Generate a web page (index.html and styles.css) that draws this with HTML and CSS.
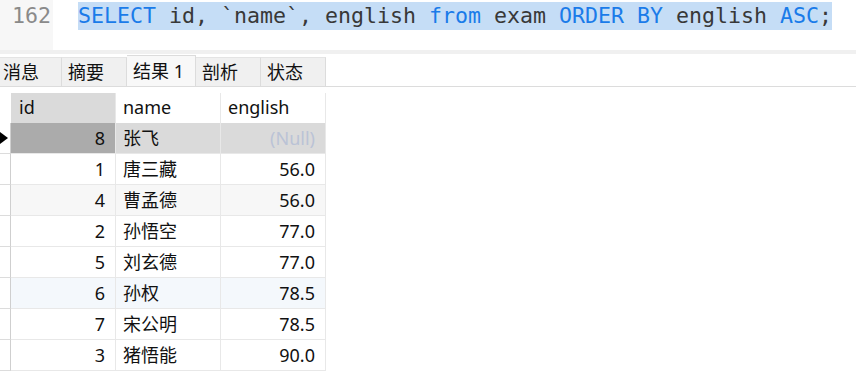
FILE: index.html
```html
<!DOCTYPE html>
<html>
<head>
    <title>Query Result</title>
  <link rel="stylesheet" href="styles.css">
</head>
  <body>
    <div class="editor">
        <div class="gutter">162</div>
        <div class="code"><span class="sel"><span class="kw">SELECT</span> id, `name`, english <span class="kw">from</span> exam <span class="kw">ORDER BY</span> english <span class="kw">ASC</span>;</span></div>
    </div>
    <div class="divider"></div>

    <div class="tabs">
        <div class="tab first">消息</div>
        <div class="tab">摘要</div>
        <div class="tab active">结果 1</div>
        <div class="tab">剖析</div>
        <div class="tab">状态</div>
    </div>

    <div class="grid">
        <div class="row head">
            <div class="cell ind"></div>
            <div class="cell id">id</div>
            <div class="cell">name</div>
            <div class="cell">english</div>
        </div>
        <div class="row current">
            <div class="cell ind"><span class="arrow"></span></div>
            <div class="cell id num">8</div>
            <div class="cell">张飞</div>
            <div class="cell num null">(Null)</div>
        </div>
        <div class="row">
            <div class="cell ind"></div>
            <div class="cell id num">1</div>
            <div class="cell">唐三藏</div>
            <div class="cell num">56.0</div>
        </div>
        <div class="row alt">
            <div class="cell ind"></div>
            <div class="cell id num">4</div>
            <div class="cell">曹孟德</div>
            <div class="cell num">56.0</div>
        </div>
        <div class="row">
            <div class="cell ind"></div>
            <div class="cell id num">2</div>
            <div class="cell">孙悟空</div>
            <div class="cell num">77.0</div>
        </div>
        <div class="row">
            <div class="cell ind"></div>
            <div class="cell id num">5</div>
            <div class="cell">刘玄德</div>
            <div class="cell num">77.0</div>
        </div>
        <div class="row hover">
            <div class="cell ind"></div>
            <div class="cell id num">6</div>
            <div class="cell">孙权</div>
            <div class="cell num">78.5</div>
        </div>
        <div class="row">
            <div class="cell ind"></div>
            <div class="cell id num">7</div>
            <div class="cell">宋公明</div>
            <div class="cell num">78.5</div>
        </div>
        <div class="row">
            <div class="cell ind"></div>
            <div class="cell id num">3</div>
            <div class="cell">猪悟能</div>
            <div class="cell num">90.0</div>
        </div>
    </div>
  </body>
</html>
```

FILE: styles.css
```css
body {
        margin: 0;
        padding: 0;
        background-color: #fff;
        font-family: "Noto Sans", "Noto Sans CJK SC", sans-serif;
        color: #111;
    }

    /* SQL editor line */
    .editor {
        display: flex;
        height: 50px;
        font-family: "DejaVu Sans Mono", "Liberation Mono", monospace;
        font-size: 21.6px;
    }

    .gutter {
        width: 53px;
        box-sizing: border-box;
        padding: 2px 2px 0 0;
        line-height: 28px;
        text-align: right;
        background-color: #f7f7f7;
        color: #8a8a8a;
    }

    .code {
        padding: 2px 0 0 25px;
        line-height: 28px;
        color: #383838;
        white-space: pre;
    }

    .sel {
        display: inline-block;
        background-color: #c5ddf6;
    }

    .kw {
        color: #1a7be9;
    }

    .divider {
        height: 4px;
        background-color: #f0f0f0;
    }

    /* Result tabs */
    .tabs {
        display: flex;
        align-items: flex-end;
        height: 32px;
        border-bottom: 1px solid #dcdcdc;
        font-size: 18px;
    }

    .tab {
        box-sizing: border-box;
        width: 65px;
        height: 29px;
        padding-left: 6px;
        line-height: 28px;
        background-color: #f0f0f0;
        border-right: 1px solid #dcdcdc;
        border-top: 1px solid #e4e4e4;
        white-space: nowrap;
    }

    .tab.first {
        width: 62px;
        padding-left: 3px;
    }

    .tab.active {
        width: 69px;
        height: 31px;
        line-height: 30px;
        background-color: #f8f8f8;
        border-top-color: #dcdcdc;
    }

    /* Data grid */
    .grid {
        margin-top: 6px;
        font-size: 18px;
    }

    .row {
        display: grid;
        grid-template-columns: 11px 105px 105px 105px;
        height: 31px;
    }

    .row.head {
        height: 30px;
    }

    .cell {
        box-sizing: border-box;
        padding: 0 10px 0 7px;
        line-height: 30px;
        border-right: 1px solid #e8e8e8;
        border-bottom: 1px solid #e8e8e8;
        white-space: nowrap;
    }

    .cell.ind {
        position: relative;
        padding: 0;
        border-right-color: #cfcfcf;
        border-bottom-color: #dcdcdc;
    }

    .head .cell {
        border-bottom: none;
        line-height: 29px;
    }

    .head .cell.id {
        padding-left: 8px;
        background-color: #dadada;
    }

    .head .cell.ind {
        border-right-color: #fff;
    }

    .num {
        text-align: right;
    }

    .null {
        color: #bac3d6;
    }

    .current .cell {
        background-color: #dadada;
    }

    .current .cell.id {
        background-color: #ababab;
    }

    .current .cell.ind {
        background-color: #fff;
    }

    .alt .cell {
        background-color: #f7f7f7;
    }

    .hover .cell {
        background-color: #f4f8fc;
    }

    .row .cell.ind {
        background-color: #fff;
    }

    .arrow {
        position: absolute;
        left: 0;
        top: 9px;
        border-left: 8px solid #000;
        border-top: 6px solid transparent;
        border-bottom: 6px solid transparent;
    }
```
